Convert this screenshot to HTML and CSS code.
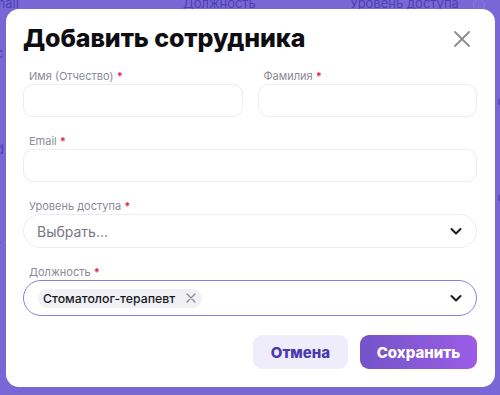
FILE: index.html
```html
<!DOCTYPE html>
<html lang="ru">
<head>
  <meta charset="UTF-8">
  <meta name="viewport" content="width=device-width, initial-scale=1.0">
  <title>Добавить сотрудника</title>
  <link rel="stylesheet" href="styles.css">
</head>
<body>

  <!-- page behind the modal -->
  <div class="backdrop">
    <div class="table_head">
      <span class="col col_email">Email</span>
      <span class="col col_role">Должность</span>
      <span class="col col_access">Уровень доступа <i class="info">i</i></span>
    </div>
    <div class="table_row"><span class="frag_left">с</span></div>
    <div class="table_row"><span class="frag_right">с</span></div>
    <div class="table_row"><span class="frag_left">d</span></div>
    <div class="table_row"><span class="frag_right">с</span></div>
    <div class="table_row"><span class="frag_left">r</span></div>
  </div>

  <!-- modal start -->
  <div class="modal">
    <div class="modal_head">
      <h1>Добавить сотрудника</h1>
      <button class="close" type="button" aria-label="Закрыть">
        <svg width="18" height="18" viewBox="0 0 18 18"><path d="M2 2L16 16M16 2L2 16" stroke="#8b8b96" stroke-width="1.8" stroke-linecap="round"/></svg>
      </button>
    </div>

    <form class="form">
      <div class="row two">
        <div class="field">
          <label>Имя (Отчество) <b>*</b></label>
          <input class="input" type="text">
        </div>
        <div class="field">
          <label>Фамилия <b>*</b></label>
          <input class="input" type="text">
        </div>
      </div>

      <div class="field">
        <label>Email <b>*</b></label>
        <input class="input" type="text">
      </div>

      <div class="field">
        <label>Уровень доступа <b>*</b></label>
        <div class="select">
          <span class="placeholder">Выбрать...</span>
          <svg class="chevron" width="14" height="14" viewBox="0 0 14 14"><path d="M2.5 5L7 9.5L11.5 5" fill="none" stroke="#1b1b24" stroke-width="2" stroke-linecap="round" stroke-linejoin="round"/></svg>
        </div>
      </div>

      <div class="field">
        <label>Должность <b>*</b></label>
        <div class="select active">
          <span class="chip">Стоматолог-терапевт
            <svg width="10" height="10" viewBox="0 0 10 10"><path d="M1 1L9 9M9 1L1 9" stroke="#8b8b96" stroke-width="1.3" stroke-linecap="round"/></svg>
          </span>
          <svg class="chevron" width="14" height="14" viewBox="0 0 14 14"><path d="M2.5 5L7 9.5L11.5 5" fill="none" stroke="#1b1b24" stroke-width="2" stroke-linecap="round" stroke-linejoin="round"/></svg>
        </div>
      </div>

      <div class="actions">
        <button class="btn cancel" type="button">Отмена</button>
        <button class="btn save" type="submit">Сохранить</button>
      </div>
    </form>
  </div>
  <!-- modal end -->

</body>
</html>
```

FILE: styles.css
```css
html {
  box-sizing: border-box;
}
*, *:before, *:after {
  box-sizing: inherit;
}
body {
  margin: 0;
  width: 500px;
  height: 395px;
  overflow: hidden;
  position: relative;
  background-color: #7867d5;
  font-family: Inter, "Noto Sans", sans-serif;
}

/* page behind */
.backdrop {
  color: #4f3fb4;
  font-size: 13px;
}
.table_head {
  display: flex;
  margin-top: -7px;
  height: 20px;
  align-items: center;
}
.col_email {
  width: 197px;
  margin-left: -14px;
}
.col_role {
  width: 167px;
}
.info {
  display: inline-block;
  width: 12px;
  height: 12px;
  margin-left: 10px;
  border: 1px solid #8a7bdc;
  border-radius: 50%;
  font-size: 8px;
  font-style: normal;
  text-align: center;
  line-height: 10px;
  color: #8a7bdc;
}
.table_row {
  height: 48px;
  display: flex;
  align-items: flex-end;
}
.frag_left {
  margin-left: -4px;
}
.frag_right {
  margin-left: auto;
  margin-right: -5px;
}

/* modal */
.modal {
  position: absolute;
  left: 6px;
  top: 9px;
  width: 489px;
  height: 378px;
  background-color: #fff;
  border-radius: 13px;
  padding: 13px 18px 0 17px;
}
.modal_head {
  display: flex;
  justify-content: space-between;
  align-items: center;
}
h1 {
  margin: 0;
  font-size: 25px;
  font-weight: 800;
  color: #0e0e12;
  letter-spacing: -0.1px;
  line-height: 32px;
}
.close {
  background: none;
  border: none;
  padding: 0;
  margin-right: 6px;
  margin-top: 2px;
  display: flex;
}

.form {
  margin-top: 16px;
  display: flex;
  flex-direction: column;
  gap: 18px;
}
.row.two {
  display: grid;
  grid-template-columns: 1fr 1fr;
  gap: 15px;
}
.field {
  display: flex;
  flex-direction: column;
}
label {
  font-size: 11px;
  color: #8b8b97;
  padding-left: 6px;
  margin-bottom: 1px;
  line-height: 13px;
}
label b {
  color: #e3245a;
  font-weight: 700;
}
.input {
  height: 33px;
  border: 1px solid #ededf1;
  border-radius: 10px;
  outline: none;
  background: #fff;
}
.select {
  height: 34px;
  border: 1px solid #ededf1;
  border-radius: 17px;
  display: flex;
  align-items: center;
  padding: 0 13px 0 13px;
}
.select.active {
  height: 36px;
  border-color: #8c7edb;
  border-radius: 18px;
}
.placeholder {
  font-size: 14px;
  color: #777786;
}
.chevron {
  margin-left: auto;
}
.chip {
  display: flex;
  align-items: center;
  gap: 11px;
  height: 19px;
  padding: 0 6px 0 5px;
  margin-left: 1px;
  background: #f1f1f5;
  border-radius: 10px;
  font-size: 12.3px;
  color: #18181f;
  font-weight: 500;
}

.actions {
  display: flex;
  justify-content: flex-end;
  gap: 12px;
  margin-top: 1px;
}
.btn {
  height: 34px;
  border: none;
  border-radius: 9px;
  font-family: Inter, "Noto Sans", sans-serif;
  font-size: 15px;
  font-weight: 800;
}
.cancel {
  width: 95px;
  background: #efedfb;
  color: #4a37ad;
}
.save {
  width: 117px;
  background: linear-gradient(90deg, #7354c9, #9b5de6);
  color: #fff;
}
```
